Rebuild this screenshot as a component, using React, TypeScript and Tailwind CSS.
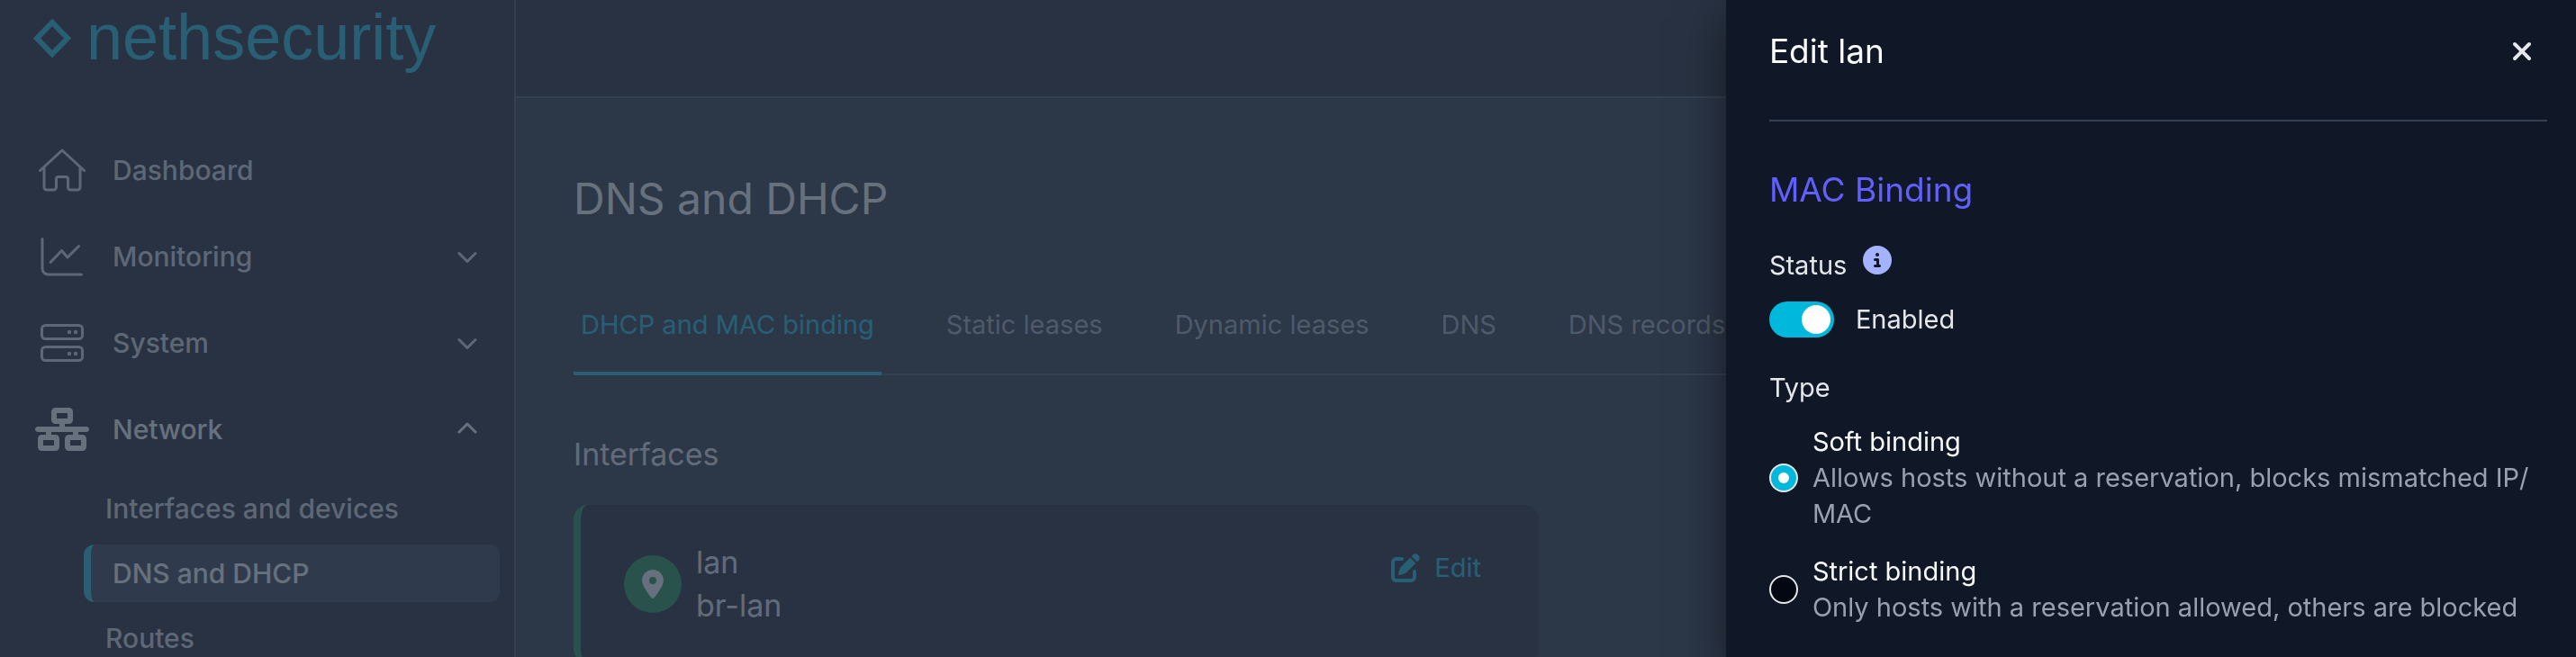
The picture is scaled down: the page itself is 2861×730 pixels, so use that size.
import { useState, type ReactNode } from 'react'
import { FaCircleInfo, FaLocationDot, FaNetworkWired, FaPenToSquare, FaXmark } from 'react-icons/fa6'

type NavItemProps = {
  label: string
  icon: ReactNode
  expandable?: boolean
  open?: boolean
}

type BindingOptionProps = {
  value: string
  title: string
  description: string
  checked: boolean
  onChange: (value: string) => void
}

const tabs = ['DHCP and MAC binding', 'Static leases', 'Dynamic leases', 'DNS', 'DNS records']

const networkLinks = ['Interfaces and devices', 'DNS and DHCP', 'Routes']

const bindingOptions = [
  {
    value: 'soft',
    title: 'Soft binding',
    description: 'Allows hosts without a reservation, blocks mismatched IP/\u200bMAC',
  },
  {
    value: 'strict',
    title: 'Strict binding',
    description: 'Only hosts with a reservation allowed, others are blocked',
  },
]

const HouseIcon = () => (
  <svg viewBox="0 0 54 48" className="h-12 w-[54px]" fill="none" stroke="currentColor" strokeWidth="3" strokeLinecap="round" strokeLinejoin="round" aria-hidden="true">
    <path d="M2.5 24.5 27 2l24.5 22.5" />
    <path d="M7 20.500V43a3 3 0 0 0 3 3h7.500a3 3 0 0 0 3-3V34a2.500 2.500 0 0 1 2.500-2.500h8a2.500 2.500 0 0 1 2.500 2.500v9a3 3 0 0 0 3 3H44a3 3 0 0 0 3-3V20.500" />
  </svg>
)

const ChartIcon = () => (
  <svg viewBox="0 0 48 48" className="size-12" fill="none" stroke="currentColor" strokeWidth="3" strokeLinecap="round" strokeLinejoin="round" aria-hidden="true">
    <path d="M2 4.500V37.500a6.500 6.500 0 0 0 6.500 6.500H45.500" />
    <path d="M11 30.500 23.500 17.500 30 25 42.500 12.500" />
  </svg>
)

const ServerIcon = () => (
  <svg viewBox="0 0 48 48" className="size-12" fill="none" stroke="currentColor" strokeWidth="3" aria-hidden="true">
    <rect x="1.5" y="4.500" width="45" height="15" rx="4" />
    <rect x="1.5" y="28.500" width="45" height="15" rx="4" />
    <g fill="currentColor" stroke="none">
      <circle cx="32" cy="12" r="2.200" />
      <circle cx="39" cy="12" r="2.200" />
      <circle cx="32" cy="36" r="2.200" />
      <circle cx="39" cy="36" r="2.200" />
    </g>
  </svg>
)

const Chevron = ({ open }: { open: boolean }) => (
  <svg viewBox="0 0 24 24" className="size-6" fill="none" stroke="currentColor" strokeWidth="3" strokeLinecap="round" strokeLinejoin="round" aria-hidden="true">
    <path d={open ? 'M3 15 12 6l9 9' : 'M3 8.500l9 9 9-9'} />
  </svg>
)

const NavItem = ({ label, icon, expandable = false, open = false }: NavItemProps) => {
  const content = (
    <>
      <span className="flex w-[60px] justify-center">{icon}</span>
      <span className="flex-1 text-left">{label}</span>
      {expandable && <Chevron open={open} />}
    </>
  )
  const className = `flex h-24 w-full items-center gap-[26px] pr-10 pl-[39px] ${open ? 'text-gray-50' : 'text-gray-300'}`

  return expandable ? (
    <button type="button" aria-expanded={open} className={className}>
      {content}
    </button>
  ) : (
    <a href="#dashboard" className={className}>
      {content}
    </a>
  )
}

const Sidebar = () => (
  <aside className="w-[573px] shrink-0 border-r-2 border-gray-700 bg-gray-950">
    <div className="flex h-[141px] items-start gap-4 pl-9 text-cyan-500">
      <svg viewBox="0 0 44 44" className="mt-5 size-11" fill="none" stroke="currentColor" strokeWidth="6" aria-hidden="true">
        <path d="M22 5 39 22.500 22 40 5 22.500Z" />
      </svg>
      <span className="font-['Liberation_Sans',sans-serif] text-[72px] leading-[82px]">nethsecurity</span>
    </div>
    <nav className="text-[30px] font-medium">
      <NavItem label="Dashboard" icon={<HouseIcon />} />
      <NavItem label="Monitoring" icon={<ChartIcon />} expandable />
      <NavItem label="System" icon={<ServerIcon />} expandable />
      <NavItem label="Network" icon={<FaNetworkWired className="h-12 w-[60px]" />} expandable open />
      <ul className="mt-2 mr-4 ml-[93px] flex flex-col gap-2">
        {networkLinks.map((link) => (
          <li key={link}>
            <a
              href="#network"
              className={
                link === 'DNS and DHCP'
                  ? 'flex h-16 items-center rounded-xl border-l-8 border-cyan-500 bg-gray-800 pl-6 text-gray-50'
                  : 'flex h-16 items-center pl-6 text-gray-300'
              }
            >
              {link}
            </a>
          </li>
        ))}
      </ul>
    </nav>
  </aside>
)

const InterfaceCard = ({ name, device }: { name: string; device: string }) => (
  <article className="flex items-start justify-between rounded-2xl border-l-8 border-green-700 bg-gray-950 px-12 py-10">
    <div className="flex items-center gap-4">
      <span className="flex size-16 items-center justify-center rounded-full bg-green-700">
        <FaLocationDot className="h-8 w-6 text-gray-50" />
      </span>
      <div className="text-[34px] leading-[48px] text-gray-200">
        <p>{name}</p>
        <p>{device}</p>
      </div>
    </div>
    <button type="button" className="flex h-[60px] items-center gap-4 px-4 text-cyan-500">
      <FaPenToSquare className="size-8" />
      Edit
    </button>
  </article>
)

const BindingOption = ({ value, title, description, checked, onChange }: BindingOptionProps) => (
  <label className="flex items-center gap-4">
    <input
      type="radio"
      name="binding-type"
      value={value}
      checked={checked}
      onChange={() => onChange(value)}
      className="grid size-8 shrink-0 appearance-none place-content-center rounded-full border-2 border-gray-200 bg-gray-950 before:size-3 before:rounded-full checked:bg-[#00b8db] checked:before:bg-white"
    />
    <span>
      <span className="block text-gray-50">{title}</span>
      <span className="block text-gray-400">{description}</span>
    </span>
  </label>
)

const EditDrawer = () => {
  const [enabled, setEnabled] = useState(true)
  const [binding, setBinding] = useState('soft')

  return (
    <section
      role="dialog"
      aria-labelledby="drawer-title"
      className="fixed inset-y-0 right-0 w-[33%] overflow-hidden bg-gray-900 pr-8 pl-12 text-gray-200 shadow-[0_20px_50px_rgba(0,0,0,0.5)]"
    >
      <header className="flex h-[135px] items-start justify-between border-b-2 border-gray-700 pt-[29px] pr-3">
        <h2 id="drawer-title" className="text-[37px] leading-[56px] text-gray-50">
          Edit lan
        </h2>
        <button type="button" aria-label="Close" className="flex h-14 items-center">
          <FaXmark className="size-8" />
        </button>
      </header>
      <h3 className="mt-12 text-[37px] leading-[56px] text-indigo-500">MAC Binding</h3>
      <div className="mt-9 flex h-10 items-center gap-[18px]">
        <label htmlFor="binding-status">Status</label>
        <FaCircleInfo className="mb-3 size-8 text-indigo-300" />
      </div>
      <div className="mt-5 flex items-center gap-6">
        <input
          id="binding-status"
          type="checkbox"
          role="switch"
          checked={enabled}
          onChange={() => setEnabled(!enabled)}
          className="flex h-10 w-[72px] appearance-none items-center rounded-full bg-gray-600 px-1 before:size-8 before:rounded-full before:bg-white checked:justify-end checked:bg-[#00b8db]"
        />
        <span>Enabled</span>
      </div>
      <fieldset className="mt-9">
        <legend>Type</legend>
        <div className="mt-5 flex flex-col gap-6">
          {bindingOptions.map((option) => (
            <BindingOption key={option.value} {...option} checked={binding === option.value} onChange={setBinding} />
          ))}
        </div>
      </fieldset>
    </section>
  )
}

export default function App() {
  return (
    <div className="flex h-screen overflow-hidden bg-gray-900 font-[Inter,sans-serif] text-[29px] leading-10">
      <Sidebar />
      <div className="min-w-0 flex-1">
        <header className="h-[109px] border-b-2 border-gray-700 bg-gray-950" />
        <main className="px-16 pt-20">
          <h1 className="text-[48px] leading-[64px] text-gray-50">DNS and DHCP</h1>
          <div role="tablist" className="mt-20 flex gap-16 border-b-2 border-gray-700">
            {tabs.map((tab, i) => (
              <button
                key={tab}
                type="button"
                role="tab"
                aria-selected={i === 0}
                className={
                  i === 0
                    ? '-mb-0.5 border-b-4 border-cyan-500 px-2 pt-2 pb-8 text-cyan-500'
                    : '-mb-0.5 border-b-4 border-transparent px-2 pt-2 pb-8 text-gray-400'
                }
              >
                {tab}
              </button>
            ))}
          </div>
          <h2 className="mt-16 text-[34px] leading-[48px] text-gray-200">Interfaces</h2>
          <div className="mt-8 grid grid-cols-2 gap-4">
            <InterfaceCard name="lan" device="br-lan" />
          </div>
        </main>
      </div>
      <div className="fixed inset-0 bg-gray-700/75" aria-hidden="true" />
      <EditDrawer />
    </div>
  )
}
